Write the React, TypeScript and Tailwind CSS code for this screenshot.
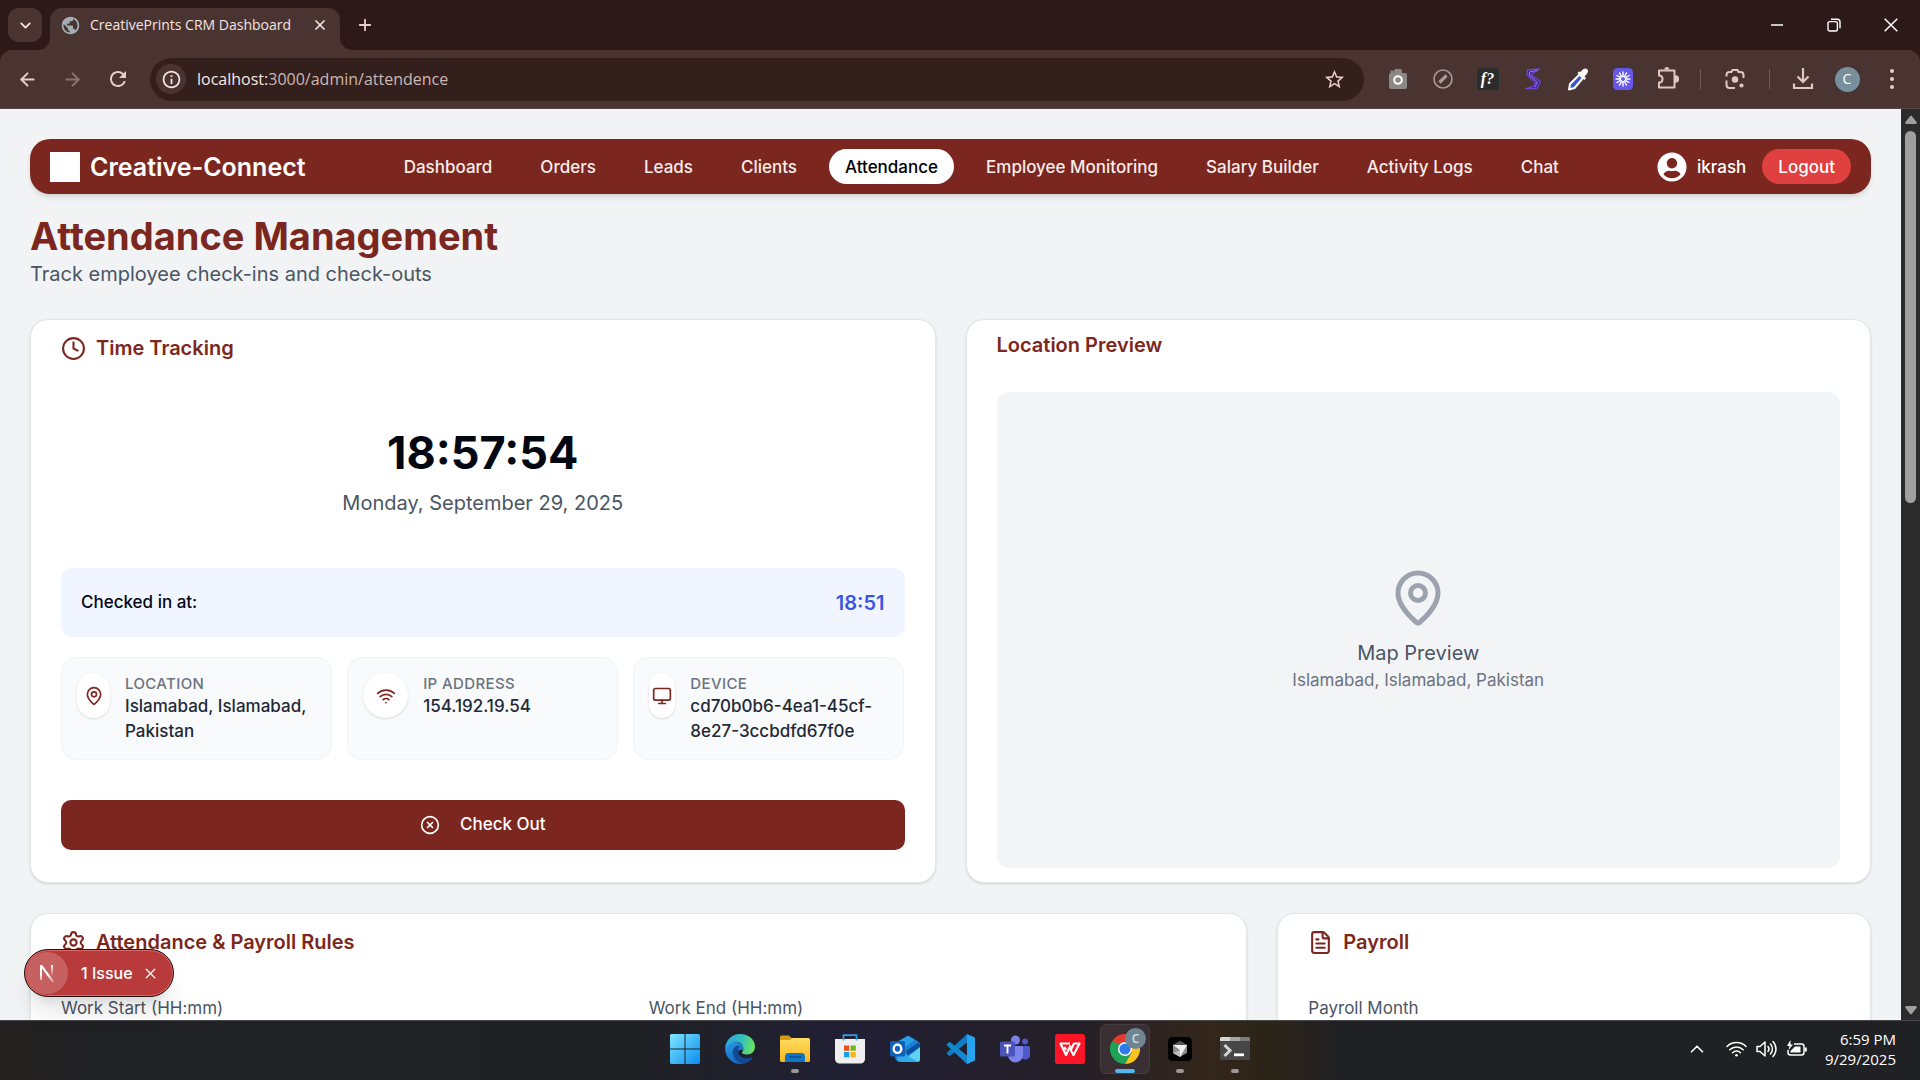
import type { ReactNode } from "react";
import {
  ArrowLeft,
  ArrowRight,
  ChevronDown,
  ChevronUp,
  CircleX,
  Clock,
  FileText,
  MapPin,
  Monitor,
  Plus,
  Settings,
  Wifi,
  X,
} from "lucide-react";
import { FaUserCircle } from "react-icons/fa";
import { MdRefresh, MdStarBorder, MdInfoOutline, MdPublic } from "react-icons/md";

const UI_FONT = "font-['Open_Sans','Noto_Sans',sans-serif]";

/* ---------- Browser window ---------- */

function IconButton({ label, className = "", children }: { label: string; className?: string; children: ReactNode }) {
  return (
    <button type="button" aria-label={label} className={`flex shrink-0 items-center justify-center ${className}`}>
      {children}
    </button>
  );
}

function TabStrip() {
  return (
    <div className="flex h-[50px] shrink-0 items-stretch bg-[#2d1917] pl-2">
      <IconButton label="Search tabs" className="mt-2 size-[34px] rounded-[10px] bg-[#4a3432] text-[#f6e4e1]">
        <ChevronDown size={17} strokeWidth={2.6} />
      </IconButton>
      <div className="relative ml-2 mt-2 flex w-[290px] items-center rounded-t-xl bg-[#4a3432] pb-2 pl-[10px] pr-3 text-[#f6e4e1]">
        <span className="absolute -left-3 bottom-0 size-3 bg-[radial-gradient(circle_at_0_0,#2d1917_12px,#4a3432_12px)]" />
        <span className="absolute -right-3 bottom-0 size-3 bg-[radial-gradient(circle_at_100%_0,#2d1917_12px,#4a3432_12px)]" />
        <MdPublic size={21} className="shrink-0 text-[#a3adb4]" />
        <span className="ml-[9px] flex-1 whitespace-nowrap text-[14px] leading-5">CreativePrints CRM Dashboard</span>
        <IconButton label="Close tab">
          <X size={16} strokeWidth={2.6} />
        </IconButton>
      </div>
      <IconButton label="New tab" className="ml-3 w-[26px] text-[#e9cfcb]">
        <Plus size={18} strokeWidth={2.4} />
      </IconButton>
      <div className="ml-auto flex pr-px text-white">
        <IconButton label="Minimize" className="w-[57px] pb-px">
          <svg width="14" height="14" viewBox="0 0 14 14" fill="none" stroke="currentColor" strokeWidth="1.5">
            <path d="M1 7h12" />
          </svg>
        </IconButton>
        <IconButton label="Restore" className="w-[57px] pb-px">
          <svg width="14" height="14" viewBox="0 0 14 14" fill="none" stroke="currentColor" strokeWidth="1.4">
            <rect x="1" y="3.6" width="9.4" height="9.4" rx="1.8" />
            <path d="M4 1.2h6.2a2.8 2.8 0 0 1 2.8 2.8v6.2" />
          </svg>
        </IconButton>
        <IconButton label="Close window" className="w-[57px] pb-px">
          <svg width="14" height="14" viewBox="0 0 14 14" fill="none" stroke="currentColor" strokeWidth="1.5">
            <path d="M.7.7l12.6 12.6M13.3.7L.7 13.3" />
          </svg>
        </IconButton>
      </div>
    </div>
  );
}

function CameraIcon() {
  return (
    <svg width="20" height="22" viewBox="0 0 20 22">
      <rect x="1" y="5" width="18" height="16" rx="2" fill="#8d8785" />
      <rect x="6" y="1" width="8" height="5" rx="1.5" fill="#8d8785" />
      <rect x="2.5" y="2.5" width="3" height="3" fill="#8d8785" />
      <circle cx="10" cy="12" r="3.8" fill="none" stroke="#fff" strokeWidth="2" />
    </svg>
  );
}

function BlockedPenIcon() {
  return (
    <svg width="22" height="22" viewBox="0 0 22 22" fill="none" stroke="#a79c9a">
      <circle cx="11" cy="11" r="9" strokeWidth="1.6" />
      <path d="M7.5 14.5l7-7" strokeWidth="3.2" />
    </svg>
  );
}

function FontFinderIcon() {
  return (
    <span className="flex size-[22px] items-center justify-center rounded bg-[#2b2c2c] font-['Liberation_Serif',serif] text-[16px] font-bold italic leading-none text-white">
      f?
    </span>
  );
}

function StripeIcon() {
  return (
    <svg width="18" height="24" viewBox="0 0 18 24" fill="none">
      <path d="M15.500 2L3.500 3 3 8l8.500 7.500L10 19l-8 2.500h11l3.500-7L7 7.500z" fill="#3b1f8c" stroke="#6d46d4" strokeWidth="1.300" strokeLinejoin="round" />
      <path d="M13.500 3.300L5.500 5l-.3 3 8.300 7-2.500 5" stroke="#a78bfa" strokeWidth=".9" />
    </svg>
  );
}

function DropperIcon() {
  return (
    <svg width="22" height="24" viewBox="0 0 22 24" fill="none">
      <path d="M12.500 7.500l3.500 3.500-8.500 10L2 22.500 3 17z" fill="#3c56c8" stroke="#fff" strokeWidth="2" strokeLinejoin="round" />
      <path d="M10.500 6l7 7 1.500-2-1.500-1.500c1.500-1.500 3.500-3.500 3.500-5.500S18.500.5 16.500 2c-1.500 1-2 2-3 3L12 4.500z" fill="#fff" />
    </svg>
  );
}

const RAYS = [0, 30, 60, 90, 120, 150, 180, 210, 240, 270, 300, 330];

function SunburstIcon() {
  return (
    <svg width="20" height="22" viewBox="0 0 20 22">
      <rect width="20" height="22" rx="4.5" fill="#6557ea" />
      <g stroke="#fff" strokeWidth="1.400" strokeLinecap="round">
        {RAYS.map((a) => (
          <path key={a} d="M10 7.800V4" transform={`rotate(${a} 10 11)`} />
        ))}
      </g>
      <circle cx="10" cy="11" r="2.600" fill="none" stroke="#fff" strokeWidth="1.200" />
    </svg>
  );
}

function PuzzleIcon() {
  return (
    <svg width="22" height="24" viewBox="0 0 22 24" fill="none" stroke="#e2c6c2" strokeWidth="2" strokeLinejoin="round">
      <path d="M2 4.500h15.500V21.500H2V16.500c2.300 0 3.500-1.500 3.500-3.500S4.300 9.500 2 9.500z" />
      <path d="M7.300 3.500a2.500 2.500 0 0 1 5 0z" fill="#e2c6c2" stroke="none" />
      <path d="M18.500 10.300a2.700 2.700 0 0 1 0 5.400z" fill="#e2c6c2" />
    </svg>
  );
}

function LensIcon() {
  return (
    <svg width="22" height="22" viewBox="0 0 22 22" fill="none" stroke="#e2c6c2" strokeWidth="2">
      <path d="M2.500 8.500V7a3 3 0 0 1 3-3h2L8.500 2h5l1 2h2a3 3 0 0 1 3 3v3M2.500 12.500V17a3 3 0 0 0 3 3H11" />
      <circle cx="11" cy="11.5" r="3.200" fill="#e2c6c2" stroke="none" />
      <circle cx="17.5" cy="17.5" r="2.100" fill="#e2c6c2" stroke="none" />
    </svg>
  );
}

function DownloadIcon() {
  return (
    <svg width="22" height="22" viewBox="0 0 22 22" fill="none" stroke="#e2c6c2" strokeWidth="2.200">
      <path d="M11 0v13.500M5.500 8.500l5.500 5.500 5.500-5.500M2 15.500V20h18v-4.500" />
    </svg>
  );
}

function Toolbar() {
  return (
    <div className="bg-[#2d1917]">
      <div className="flex h-[59px] shrink-0 items-center rounded-t-xl border-b border-[#5a4644] bg-[#4a3432] pl-[5px] text-[#e9cfcb]">
        <IconButton label="Back" className="w-[45px]">
          <ArrowLeft size={21} strokeWidth={2.2} />
        </IconButton>
        <IconButton label="Forward" className="w-[45px] text-[#8b7472]">
          <ArrowRight size={21} strokeWidth={2.2} />
        </IconButton>
        <IconButton label="Reload" className="w-[46px]">
          <MdRefresh size={24} />
        </IconButton>
        <div className="ml-[9px] flex h-[43px] flex-1 items-center rounded-full bg-[#331f1c] pl-[6px] pr-[18px]">
          <IconButton label="Site information" className="size-[30px] rounded-full bg-[#4a3432] text-[#f6e4e1]">
            <MdInfoOutline size={21} />
          </IconButton>
          <a href="#" className="ml-[11px] text-[16px] leading-6 text-[#cdb7b4]">
            <span className="text-[#f8e6e3]">localhost:</span>3000/admin/attendence
          </a>
          <IconButton label="Bookmark" className="ml-auto">
            <MdStarBorder size={23} />
          </IconButton>
        </div>
        <div className="flex items-center pl-[11px]">
          <IconButton label="Screenshot extension" className="w-[45px]"><CameraIcon /></IconButton>
          <IconButton label="Pen extension" className="w-[45px]"><BlockedPenIcon /></IconButton>
          <IconButton label="Font finder" className="w-[45px]"><FontFinderIcon /></IconButton>
          <IconButton label="Stylus extension" className="w-[45px]"><StripeIcon /></IconButton>
          <IconButton label="Color picker" className="w-[45px]"><DropperIcon /></IconButton>
          <IconButton label="Loom" className="w-[45px]"><SunburstIcon /></IconButton>
          <IconButton label="Extensions" className="w-[46px] pb-[3px]"><PuzzleIcon /></IconButton>
          <span className="ml-[9px] h-5 w-px bg-[#735b58]" />
          <IconButton label="Search with Lens" className="w-[68px]"><LensIcon /></IconButton>
          <span className="h-5 w-px bg-[#735b58]" />
          <IconButton label="Downloads" className="ml-[10px] w-[45px]"><DownloadIcon /></IconButton>
          <IconButton label="Profile" className="w-[44px]">
            <span className="flex size-[25px] items-center justify-center rounded-full bg-[#78909c] text-[14px] leading-none text-white">C</span>
          </IconButton>
          <IconButton label="Menu" className="mr-[5px] w-[46px]">
            <svg width="6" height="22" viewBox="0 0 6 22" fill="currentColor">
              <circle cx="3" cy="3" r="2" />
              <circle cx="3" cy="11" r="2" />
              <circle cx="3" cy="19" r="2" />
            </svg>
          </IconButton>
        </div>
      </div>
    </div>
  );
}

function Scrollbar() {
  return (
    <div className="flex w-[19px] shrink-0 flex-col items-center bg-[#2b2b2c] py-[5px]">
      <svg width="12" height="9" viewBox="0 0 12 9" fill="#9f9f9f" className="mt-px">
        <path d="M5 1.200a1.200 1.200 0 0 1 2 0L11.500 7A1.200 1.200 0 0 1 10.500 9h-9A1.200 1.200 0 0 1 .5 7z" />
      </svg>
      <div className="mt-[7px] h-[372px] w-[11px] rounded-full bg-[#9f9f9f]" />
      <svg width="12" height="9" viewBox="0 0 12 9" fill="#9f9f9f" className="mt-auto">
        <path d="M5 7.800a1.200 1.200 0 0 0 2 0L11.500 2A1.200 1.200 0 0 0 10.500 0h-9A1.200 1.200 0 0 0 .5 2z" />
      </svg>
    </div>
  );
}

/* ---------- Application ---------- */

const NAV_ITEMS = [
  "Dashboard",
  "Orders",
  "Leads",
  "Clients",
  "Attendance",
  "Employee Monitoring",
  "Salary Builder",
  "Activity Logs",
  "Chat",
];

function NavBar() {
  return (
    <header className="flex h-[55px] items-center justify-between rounded-[20px] bg-[#7b2720] px-5 text-white shadow-md">
      <div className="flex items-center gap-[10px]">
        <span className="size-[30px] bg-white" />
        <span className="text-[25px] font-semibold leading-8">Creative-Connect</span>
      </div>
      <nav className="flex items-center gap-4">
        {NAV_ITEMS.map((item) => (
          <a
            key={item}
            href="#"
            className={
              item === "Attendance"
                ? "rounded-full bg-white px-4 pb-1 pt-1.5 text-[17px] font-medium leading-[25px] text-black"
                : "rounded-full px-4 pb-1 pt-1.5 text-[17px] font-medium leading-[25px] text-[#f8eceb]"
            }
          >
            {item}
          </a>
        ))}
      </nav>
      <div className="flex items-center">
        <FaUserCircle size={30} />
        <span className="ml-[10px] pt-0.5 text-[17px] font-medium leading-[25px]">ikrash</span>
        <button type="button" className="ml-4 rounded-full bg-[#e04040] px-4 pb-1 pt-1.5 text-[17px] font-medium leading-[25px]">
          Logout
        </button>
      </div>
    </header>
  );
}

const CARD = "rounded-[18px] border border-[#e4e6eb] bg-white px-[30px] pt-[15px] shadow";

function CardTitle({ icon, children }: { icon?: ReactNode; children: ReactNode }) {
  return (
    <h2 className="flex items-center gap-[10px] text-xl font-semibold leading-[27px] text-[#7b2720]">
      {icon}
      {children}
    </h2>
  );
}

function InfoTile({ icon, width, label, value }: { icon: ReactNode; width: string; label: string; value: string }) {
  return (
    <div className="flex items-start gap-[15px] rounded-[15px] border border-[#f1f3f6] bg-[#f9fafb] p-[15px]">
      <span className={`flex h-[45px] shrink-0 items-center justify-center rounded-full bg-white text-[#7b2720] shadow-sm ${width}`}>
        {icon}
      </span>
      <div className="min-w-0">
        <p className="text-[15px] font-medium leading-[21px] tracking-wide text-[#6b7280]">{label}</p>
        <p className="text-[17px] font-medium leading-[25px] text-[#1f2937]">{value}</p>
      </div>
    </div>
  );
}

function TimeTracking() {
  return (
    <section className={`${CARD} pb-8`}>
      <CardTitle icon={<Clock size={25} />}>Time Tracking</CardTitle>
      <div className="mt-[66px] text-center">
        <p className="text-[45px] font-bold leading-[50px] text-[#030712]">18:57:54</p>
        <p className="mt-[10px] text-xl leading-[30px] text-[#4b5563]">Monday, September 29, 2025</p>
      </div>
      <div className="mt-[50px] flex h-[69px] items-center justify-between rounded-xl bg-[#f0f5ff] px-5">
        <span className="text-[17px] font-medium text-[#030712]">Checked in at:</span>
        <span className="text-xl font-semibold text-[#3b55e0]">18:51</span>
      </div>
      <div className="mt-5 grid grid-cols-3 gap-[15px]">
        <InfoTile width="w-[33px]" icon={<MapPin size={20} />} label="LOCATION" value="Islamabad, Islamabad, Pakistan" />
        <InfoTile width="w-[45px]" icon={<Wifi size={20} />} label="IP ADDRESS" value="154.192.19.54" />
        <InfoTile width="w-[26px]" icon={<Monitor size={20} />} label="DEVICE" value="cd70b0b6-4ea1-45cf-8e27-3ccbdfd67f0e" />
      </div>
      <button
        type="button"
        className="mt-10 flex h-[50px] w-full items-center justify-center gap-5 rounded-[10px] bg-[#7b2720] text-[17px] font-medium text-white"
      >
        <CircleX size={20} />
        Check Out
      </button>
    </section>
  );
}

function LocationPreview() {
  return (
    <section className={`${CARD} flex flex-col pb-[14px]`}>
      <h2 className="text-xl font-semibold leading-5 text-[#7b2720]">Location Preview</h2>
      <div className="mt-[37px] flex flex-1 flex-col items-center justify-center rounded-xl bg-[#f3f4f6]">
        <MapPin size={60} className="text-[#9ca3af]" />
        <p className="mt-[10px] text-xl leading-[30px] text-[#4b5563]">Map Preview</p>
        <p className="text-[17px] leading-[25px] text-[#6b7280]">Islamabad, Islamabad, Pakistan</p>
      </div>
    </section>
  );
}

function Field({ id, label, type }: { id: string; label: string; type: string }) {
  return (
    <div className="flex min-w-0 flex-col">
      <label htmlFor={id} className="text-[17px] leading-[25px] text-[#4b5563]">
        {label}
      </label>
      <input id={id} type={type} className="mt-[10px] h-[50px] w-full rounded-[10px] border border-[#e4e6eb] px-4" />
    </div>
  );
}

function IssueBadge() {
  return (
    <div className="absolute bottom-[23px] left-6 flex h-12 w-[150px] items-center rounded-full border border-[#24100f] bg-[#b93a3a] pl-px text-white shadow-xl ring-1 ring-inset ring-[#d86a6a]">
      <span className="flex size-[42px] items-center justify-center rounded-full bg-[#c76161]">
        <svg width="20" height="22" viewBox="0 0 20 22" fill="none">
          <defs>
            <linearGradient id="nDiagonal" x1="0" y1="0" x2="0" y2="1">
              <stop offset=".55" stopColor="#fff" />
              <stop offset="1" stopColor="#fff" stopOpacity="0.2" />
            </linearGradient>
            <linearGradient id="nStem" x1="0" y1="0" x2="0" y2="1">
              <stop stopColor="#fff" />
              <stop offset="1" stopColor="#fff" stopOpacity="0" />
            </linearGradient>
          </defs>
          <path d="M3 18V3h2.200l12 16.500-1.800 1.200L5 6.500V18z" fill="url(#nDiagonal)" />
          <path d="M14 3h2v11h-2z" fill="url(#nStem)" />
        </svg>
      </span>
      <span className="ml-[13px] whitespace-nowrap text-[16px] font-medium">1 Issue</span>
      <IconButton label="Dismiss issue" className="ml-[9px]">
        <X size={17} strokeWidth={1.8} />
      </IconButton>
    </div>
  );
}

function Page() {
  return (
    <div className="relative flex min-h-0 flex-1 font-['Inter',sans-serif]">
      <main className="min-w-0 flex-1 overflow-hidden bg-[#f1f3f5] p-[30px]">
        <NavBar />
        <div className="mt-5">
          <h1 className="text-[38px] font-bold leading-[45px] text-[#7b2720]">Attendance Management</h1>
          <p className="text-xl leading-[30px] text-[#4b5563]">Track employee check-ins and check-outs</p>
        </div>
        <div className="mt-[30px] grid grid-cols-2 gap-[30px]">
          <TimeTracking />
          <LocationPreview />
        </div>
        <div className="mt-[30px] grid grid-cols-3 gap-[30px]">
          <section className={`${CARD} col-span-2 pb-[30px]`}>
            <CardTitle icon={<Settings size={25} />}>Attendance &amp; Payroll Rules</CardTitle>
            <div className="mt-10 grid grid-cols-2 gap-5">
              <Field id="work-start" label="Work Start (HH:mm)" type="text" />
              <Field id="work-end" label="Work End (HH:mm)" type="text" />
            </div>
          </section>
          <section className={`${CARD} pb-[30px]`}>
            <CardTitle icon={<FileText size={25} />}>Payroll</CardTitle>
            <div className="mt-10">
              <Field id="payroll-month" label="Payroll Month" type="text" />
            </div>
          </section>
        </div>
      </main>
      <Scrollbar />
      <IssueBadge />
    </div>
  );
}

/* ---------- Taskbar ---------- */

function WindowsIcon() {
  return (
    <svg width="30" height="30" viewBox="0 0 30 30">
      <defs>
        <linearGradient id="win" x1="0" y1="0" x2="1" y2="1">
          <stop stopColor="#7fe7ff" />
          <stop offset="1" stopColor="#0a8cf0" />
        </linearGradient>
      </defs>
      <path fill="url(#win)" d="M1.500 0h13v14.500H0V1.500A1.500 1.500 0 0 1 1.500 0zM15.500 0h13A1.500 1.500 0 0 1 30 1.500v13H15.500zM0 15.500h14.500V30h-13A1.500 1.500 0 0 1 0 28.500zM15.500 15.500H30v13a1.500 1.500 0 0 1-1.500 1.500h-13z" />
    </svg>
  );
}

function EdgeIcon() {
  return (
    <svg width="30" height="30" viewBox="0 0 30 30">
      <defs>
        <linearGradient id="edgeTop" x1="0" y1=".3" x2="1" y2=".5">
          <stop stopColor="#2aa5e0" />
          <stop offset=".55" stopColor="#35c1b9" />
          <stop offset="1" stopColor="#6ee35c" />
        </linearGradient>
        <linearGradient id="edgeLeft" x1="0" y1="0" x2=".6" y2="1">
          <stop stopColor="#2b9be6" />
          <stop offset="1" stopColor="#1262b8" />
        </linearGradient>
      </defs>
      <path fill="url(#edgeLeft)" d="M.2 14C1 7 8 7 12 8c4 1.200 7 4 6.500 8-4-1-7 1-5.500 5 1.500 4.500 7.500 6 12.500 4C20 31.500 12 31 7 27.500 2 24 0 19 .2 14z" />
      <path fill="#134a96" d="M13 11.500c-5 1-6.500 6.500-4 11.500 2 4 6 7 10 6.500 3.500-.8 6.500-2.500 8.500-5.500.3-.5-.2-1-.8-.7-6 2.700-13.700-.3-13.700-6 0-2.300 1-3.700 2-4.300z" />
      <path fill="url(#edgeTop)" d="M.2 14C.8 6 7 0 15 0c9 0 15 6 15 12.500 0 5-3.500 8-8 8-3.500 0-5.500-1.300-5-2.300 1.500-1.500 2-4 .5-6.700C15 7 8 5.500.2 14z" />
    </svg>
  );
}

function ExplorerIcon() {
  return (
    <svg width="30" height="30" viewBox="0 0 30 30">
      <defs>
        <linearGradient id="folder" x1="0" y1="0" x2="0" y2="1">
          <stop stopColor="#ffdc60" />
          <stop offset="1" stopColor="#f6b820" />
        </linearGradient>
      </defs>
      <path d="M0 3a1.500 1.500 0 0 1 1.500-1.500H9l3 3V8H0z" fill="#d99b10" />
      <path d="M0 6h10l2-2h16.500A1.500 1.500 0 0 1 30 5.500v21a1.500 1.500 0 0 1-1.500 1.500h-27A1.500 1.500 0 0 1 0 26.500z" fill="url(#folder)" />
      <path d="M5 28v-5.500A3.500 3.500 0 0 1 8.500 19h13a3.500 3.500 0 0 1 3.500 3.500V28z" fill="#1275c4" />
      <path d="M9.500 23h11" stroke="#0a4f90" strokeWidth="1.500" strokeLinecap="round" />
    </svg>
  );
}

function StoreIcon() {
  return (
    <svg width="30" height="30" viewBox="0 0 30 30">
      <path d="M0 5h30v20a4.500 4.500 0 0 1-4.500 4.500h-21A4.500 4.500 0 0 1 0 25z" fill="#efefef" />
      <path d="M8.500 6.500V1.200h13v5.300" fill="none" stroke="#2f9fe0" strokeWidth="1.700" />
      <path d="M9 11.500h5.300v5.300H9z" fill="#e8511f" />
      <path d="M15.500 11.500h5.300v5.300h-5.300z" fill="#74b51c" />
      <path d="M9 18h5.300v5.300H9z" fill="#129fe6" />
      <path d="M15.500 18h5.300v5.300h-5.300z" fill="#f8b317" />
    </svg>
  );
}

function OutlookIcon() {
  return (
    <svg width="30" height="30" viewBox="0 0 30 30">
      <path d="M5 9l12-7a2 2 0 0 1 2 0l10 6a2 2 0 0 1 1 1.700V25a3 3 0 0 1-3 3H10a5 5 0 0 1-5-5z" fill="#1c80d0" />
      <path d="M8 7.500L18 2l6.500 4L14 14z" fill="#2aa0ea" />
      <path d="M16 17L29 8l1 3v3L18 21z" fill="#0b4ea3" />
      <path d="M30 13v12a3 3 0 0 1-3 3H11z" fill="#5fd3f2" />
      <path d="M7 22l8-2 13 8H11a4 4 0 0 1-4-4z" fill="#2daae8" />
      <rect x="0" y="7" width="15" height="15.5" rx="1.500" fill="#0f62b8" />
      <ellipse cx="7.5" cy="14.7" rx="3.800" ry="4.200" fill="none" stroke="#fff" strokeWidth="2.400" />
    </svg>
  );
}

function VSCodeIcon() {
  return (
    <svg width="30" height="30" viewBox="0 0 30 30">
      <path d="M22 0L2 18.500a1 1 0 0 0 0 1.500l2 1.800c.4.300.9.300 1.300 0L22 8.500z" fill="#0f7cc4" />
      <path d="M22 30L2 11.500A1 1 0 0 1 2 10l2-1.800c.4-.3.9-.3 1.300 0L22 21.500z" fill="#1287cf" />
      <path d="M22 0l7 3a1.500 1.500 0 0 1 1 1.400v21.200a1.500 1.500 0 0 1-1 1.400l-7 3z" fill="#26a3ee" />
    </svg>
  );
}

function TeamsIcon() {
  return (
    <svg width="30" height="28" viewBox="0 0 30 28">
      <circle cx="25" cy="6.5" r="3" fill="#5059c9" />
      <path d="M20 11h8.500a1.500 1.500 0 0 1 1.500 1.500V19a4.500 4.500 0 0 1-9 2z" fill="#5059c9" />
      <circle cx="15.5" cy="5" r="4.500" fill="#7b83eb" />
      <path d="M9 11h13a1 1 0 0 1 1 1v8a7.500 7.500 0 0 1-15 0v-8a1 1 0 0 1 1-1z" fill="#7b83eb" />
      <rect x="0" y="6.5" width="15" height="15" rx="1.500" fill="#4b53bc" />
      <path d="M4 10.500h7M7.500 10.500v8" stroke="#fff" strokeWidth="1.900" fill="none" />
    </svg>
  );
}

function WpsIcon() {
  return (
    <svg width="30" height="30" viewBox="0 0 30 30">
      <rect width="30" height="30" rx="2.500" fill="#fb1527" />
      <g fill="none" stroke="#fff" strokeWidth="2.200" strokeLinejoin="round">
        <path d="M15 9.500H5.500l5.500 11.500 4.500-9.500" />
        <path d="M9.500 13l1.500 3" />
        <path d="M14.500 14l4 7 6-11.500h-5.500l-3 6" />
      </g>
    </svg>
  );
}

function ChromeIcon() {
  return (
    <svg width="30" height="30" viewBox="0 0 30 30">
      <path d="M15 15L2 7.500A15 15 0 0 1 28 7.500H15z" fill="#e33b2e" />
      <path d="M2 7.500A15 15 0 0 0 15 30l6.500-11.300L15 15z" fill="#1fa253" />
      <path d="M28 7.500A15 15 0 0 1 15 30l6.500-11.200L20 7.500z" fill="#fcc31e" />
      <path d="M8.500 18.700L2 7.500l9 3z" fill="#1fa253" />
      <circle cx="15" cy="15" r="7" fill="#fff" />
      <circle cx="15" cy="15" r="5.600" fill="#2f7bee" />
    </svg>
  );
}

function CursorIcon() {
  return (
    <svg width="24" height="24" viewBox="0 0 24 24">
      <rect width="24" height="24" rx="4.500" fill="#000" />
      <path d="M12 4l7 4v8l-7 4-7-4V8z" fill="#8a8a8a" />
      <path d="M12 4l7 4-7 2-7-2z" fill="#555" />
      <path d="M5 8h14l-7 12v-7z" fill="#f2f2f2" />
      <path d="M5 16l7-3v7z" fill="#bdbdbd" />
    </svg>
  );
}

function TerminalIcon() {
  return (
    <svg width="30" height="24" viewBox="0 0 30 24">
      <rect width="30" height="23" rx="1.500" fill="#474747" />
      <path d="M1.500 0H10v4H0V1.500A1.500 1.500 0 0 1 1.500 0z" fill="#d6d6d6" />
      <path d="M10 0h10v4H10z" fill="#a5a5a5" />
      <path d="M20 0h8.500A1.500 1.500 0 0 1 30 1.500V4H20z" fill="#7c7c7c" />
      <path d="M4.500 8l5.500 5.500L4.500 19" fill="none" stroke="#d4d4d4" strokeWidth="3" />
      <path d="M14 17.800h10" stroke="#fff" strokeWidth="2.800" />
    </svg>
  );
}

type AppEntry = { name: string; icon: ReactNode; running?: boolean; active?: boolean };

const APPS: AppEntry[] = [
  { name: "Start", icon: <WindowsIcon /> },
  { name: "Edge", icon: <EdgeIcon /> },
  { name: "File Explorer", icon: <ExplorerIcon />, running: true },
  { name: "Microsoft Store", icon: <StoreIcon /> },
  { name: "Outlook", icon: <OutlookIcon /> },
  { name: "Visual Studio Code", icon: <VSCodeIcon /> },
  { name: "Teams", icon: <TeamsIcon /> },
  { name: "WPS Office", icon: <WpsIcon /> },
  { name: "Chrome", icon: <ChromeIcon />, active: true },
  { name: "Cursor", icon: <CursorIcon />, running: true },
  { name: "Terminal", icon: <TerminalIcon />, running: true },
];

function Taskbar() {
  return (
    <footer className="grid h-[60px] shrink-0 grid-cols-[1fr_auto_1fr] items-center border-t border-[#46474a] bg-[linear-gradient(90deg,#24211f_0%,#202226_6%,#202125_33%,#211f33_44%,#251f28_56%,#33261a_63%,#2c2418_66%,#202125_70%)] pb-[3px]">
      <div />
      <div className="flex gap-[5px]">
        {APPS.map((app) => (
          <button
            key={app.name}
            type="button"
            aria-label={app.name}
            className={
              app.active
                ? "relative flex size-[50px] items-center justify-center rounded-md border border-[#463b3e] bg-[#3a2f33]"
                : "relative flex size-[50px] items-center justify-center"
            }
          >
            {app.icon}
            {app.active && (
              <>
                <span className="absolute right-[3px] top-[3px] flex size-[21px] items-center justify-center rounded-full bg-[#6f8591] text-[12px] font-semibold leading-none text-[#d5dde1]">
                  C
                </span>
                <span className="absolute bottom-0 h-1 w-5 rounded-full bg-[#52b8ea]" />
              </>
            )}
            {app.running && <span className="absolute bottom-px h-1 w-2 rounded-full bg-[#9b9799]" />}
          </button>
        ))}
      </div>
      <div className="flex items-center justify-end pr-6 text-white">
        <IconButton label="Show hidden icons" className="mr-[18px]">
          <ChevronUp size={22} strokeWidth={1.8} />
        </IconButton>
        <IconButton label="Network, volume and battery" className="gap-[9px]">
          <svg width="21" height="18" viewBox="0 0 21 18" fill="none" stroke="currentColor" strokeWidth="1.500" strokeLinecap="round">
            <path d="M1 6.500a13.500 13.500 0 0 1 19 0M3.800 9.700a9.500 9.500 0 0 1 13.400 0M6.600 12.700a5.500 5.500 0 0 1 7.800 0" />
            <circle cx="10.5" cy="15.2" r="1.300" fill="currentColor" stroke="none" />
          </svg>
          <svg width="21" height="18" viewBox="0 0 21 18" fill="none" stroke="currentColor" strokeWidth="1.500" strokeLinecap="round" strokeLinejoin="round">
            <path d="M1 6.500v5h3L9 16V2L4 6.500zM12 6.500a4 4 0 0 1 0 5M14.500 4a7.500 7.500 0 0 1 0 10M17 1.500a11 11 0 0 1 0 15" />
          </svg>
          <svg width="21" height="18" viewBox="0 0 21 18" fill="none" stroke="currentColor" strokeWidth="1.500">
            <path d="M8 4h7.500A2.500 2.500 0 0 1 18 6.500v6a2.500 2.500 0 0 1-2.500 2.500h-11A2.500 2.500 0 0 1 2 12.500V10" />
            <path d="M9 6.500h5.500v6h-10V11z" fill="currentColor" stroke="none" />
            <path d="M4.500 0L1 6h2.500L2.500 10 7 4.500H4.500z" fill="currentColor" stroke="none" />
            <path d="M19.800 7.500v4" strokeWidth="2" />
          </svg>
        </IconButton>
        <p className="ml-[18px] text-right text-[15px] leading-5">
          6:59 PM
          <br />
          9/29/2025
        </p>
      </div>
    </footer>
  );
}

export default function App() {
  return (
    <div className={`flex h-screen flex-col overflow-hidden ${UI_FONT}`}>
      <TabStrip />
      <Toolbar />
      <Page />
      <Taskbar />
    </div>
  );
}
